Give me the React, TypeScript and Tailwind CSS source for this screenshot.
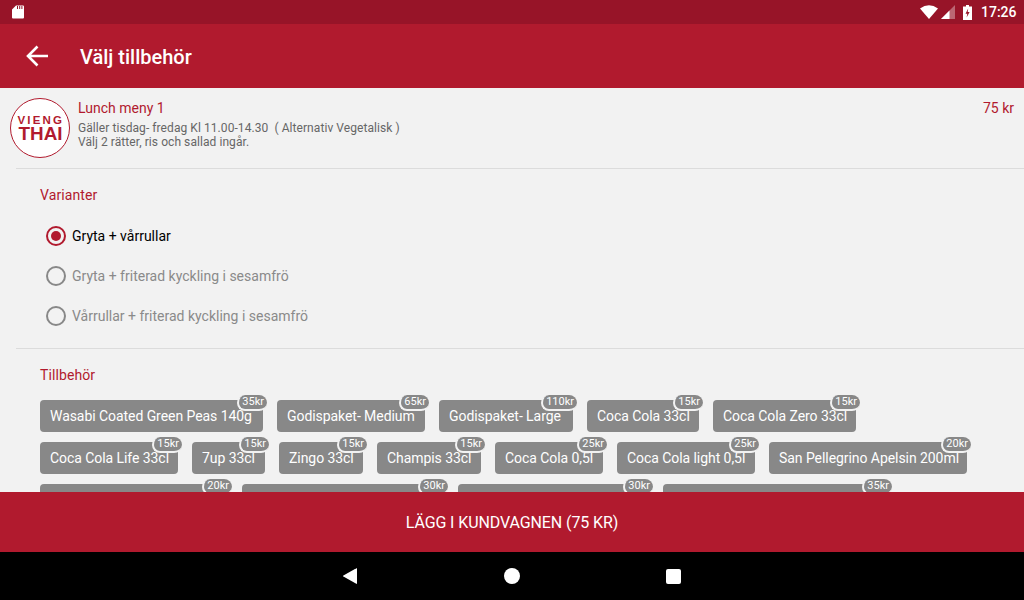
import React from "react";

const chips = [
  ["Wasabi Coated Green Peas 140g", "35kr", "w-[223px]"],
  ["Godispaket- Medium", "65kr", "w-[148px]"],
  ["Godispaket- Large", "110kr", "w-[134px]"],
  ["Coca Cola 33cl", "15kr", "w-[112px]"],
  ["Coca Cola Zero 33cl", "15kr", "w-[143px]"],
  ["Coca Cola Life 33cl", "15kr", "w-[138px]"],
  ["7up 33cl", "15kr", "w-[73px]"],
  ["Zingo 33cl", "15kr", "w-[84px]"],
  ["Champis 33cl", "15kr", "w-[104px]"],
  ["Coca Cola 0,5l", "25kr", "w-[108px]"],
  ["Coca Cola light 0,5l", "25kr", "w-[138px]"],
  ["San Pellegrino Apelsin 200ml", "20kr", "w-[198px]"],
];

const hiddenRow = [
  ["w-[188px]", "20kr"],
  ["w-[202px]", "30kr"],
  ["w-[191px]", "30kr"],
  ["w-[225px]", "35kr"],
];

function Badge({ price }: { price: string }) {
  return (
    <span className="absolute -top-[5px] -right-[4px] h-[14px] px-[3px] rounded-full bg-[#888888] text-white text-[11px] tracking-normal leading-[14px] box-content border-2 border-[#f2f2f2] border-r-0 border-t-0">
      {price}
    </span>
  );
}

function Chip({ name, price, width }: { name: string; price: string; width: string }) {
  return (
    <div className={`relative h-8 pl-[10px] rounded-[4px] bg-[#888888] text-white text-[14px] tracking-[-0.06px] leading-8 whitespace-nowrap ${width}`}>
      {name}
      <Badge price={price} />
    </div>
  );
}

function Radio({ label, active }: { label: string; active?: boolean }) {
  return (
    <div className="h-10 flex items-center pl-[46px] gap-[6px]">
      <span
        className={
          active
            ? "w-5 h-5 rounded-full border-2 border-[#b11a2e] flex items-center justify-center"
            : "w-5 h-5 rounded-full border-2 border-[#888888] flex items-center justify-center"
        }
      >
        {active && <span className="w-[10px] h-[10px] rounded-full bg-[#b11a2e]" />}
      </span>
      <span className={active ? "text-[14px] text-black" : "text-[14px] text-[#8a8a8a]"}>{label}</span>
    </div>
  );
}

export default function App() {
  return (
    <div className="w-[1024px] h-[600px] flex flex-col overflow-hidden bg-[#f2f2f2] font-['Roboto',sans-serif]">
      <div className="h-6 shrink-0 bg-[#971428] flex items-center justify-between pl-3 pr-2 text-white">
        <svg width="12" height="14" viewBox="0 0 12 14" fill="white">
          <path d="M4 0.5h7a1 1 0 0 1 1 1v11a1 1 0 0 1-1 1H1a1 1 0 0 1-1-1V4.5zM5 1v3h1V1zM7.2 1v3h1V1zM9.4 1v3h1V1z" fillRule="evenodd" />
        </svg>
        <div className="flex items-center">
          <svg width="18" height="14" viewBox="0 0 18 14" fill="white" className="mr-[3px]">
            <path d="M0 3.5Q9-3 18 3.5L9 14z" />
          </svg>
          <svg width="14" height="14" viewBox="0 0 14 14" className="mr-[8px]">
            <path d="M14 0V14H0z" fill="white" fillOpacity="0.35" />
            <path d="M8.5 5.5V14H0z" fill="white" />
          </svg>
          <svg width="9" height="15" viewBox="0 0 9 15" className="mr-[9px]">
            <path d="M3 0h3v1.5h3V15H0V1.5h3z" fill="white" />
            <path d="M5.2 3.5L2.5 8.8h1.8L3.6 12.5 6.6 7H4.7z" fill="#971428" />
          </svg>
          <span className="text-[14px] font-medium leading-6 w-[35px]">17:26</span>
        </div>
      </div>

      <div className="h-16 shrink-0 bg-[#b11a2e] flex items-center text-white">
        <svg width="24" height="24" viewBox="0 0 24 24" fill="none" stroke="white" strokeWidth="2.6" className="ml-[25px]">
          <path d="M23 12H3M12.5 2.5L3 12l9.5 9.5" />
        </svg>
        <span className="ml-[31px] text-[20px] font-medium pt-[2px]">Välj tillbehör</span>
      </div>

      <div className="flex-1 min-h-0 overflow-hidden">
        <div className="flex h-[80px] pt-[10px] pl-[10px] pr-[10px]">
          <svg width="60" height="60" viewBox="0 0 60 60" className="shrink-0">
            <circle cx="30" cy="30" r="29.5" fill="white" stroke="#b11a2e" strokeWidth="1" />
            <text x="7.5" y="25.5" fontFamily="Liberation Sans" fontWeight="700" fontSize="11.5" fill="#b11a2e" textLength="44.5" lengthAdjust="spacing">VIENG</text>
            <text x="8.5" y="41.5" fontFamily="Liberation Sans" fontWeight="700" fontSize="19" fill="#b11a2e" textLength="44" lengthAdjust="spacingAndGlyphs">THAI</text>
          </svg>
          <div className="ml-2 flex-1 min-w-0">
            <div className="flex justify-between text-[14px] leading-5 text-[#b11a2e]">
              <span>Lunch meny 1</span>
              <span>75 kr</span>
            </div>
            <div className="text-[12px] leading-[14px] tracking-[0.07px] text-[#666666] mt-[3px] whitespace-pre">
              {"Gäller tisdag- fredag Kl 11.00-14.30  ( Alternativ Vegetalisk )\nVälj 2 rätter, ris och sallad ingår."}
            </div>
          </div>
        </div>

        <div className="ml-4 border-t border-[#dcdcdc] h-[180px]">
          <div className="pl-6 pt-[18px] text-[14px] tracking-[0.1px] leading-4 text-[#b11a2e]">Varianter</div>
          <div className="mt-[13px] -ml-4">
            <Radio label="Gryta + vårrullar" active />
            <Radio label="Gryta + friterad kyckling i sesamfrö" />
            <Radio label="Vårrullar + friterad kyckling i sesamfrö" />
          </div>
        </div>

        <div className="ml-4 border-t border-[#dcdcdc] pl-6">
          <div className="pt-[18px] text-[14px] tracking-[0.1px] leading-4 text-[#b11a2e]">Tillbehör</div>
          <div className="mt-[17px] flex flex-wrap gap-x-[14px] gap-y-[10px] w-[950px]">
            {chips.map(([n, p, w]) => (
              <Chip key={n} name={n} price={p} width={w} />
            ))}
            {hiddenRow.map(([w, p], i) => (
              <div key={i} className={`relative h-8 rounded-[4px] bg-[#888888] ${w}`}>
                <Badge price={p} />
              </div>
            ))}
          </div>
        </div>
      </div>

      <div className="h-[60px] shrink-0 bg-[#b11a2e] flex items-center justify-center pt-[2px] text-white text-[16px] tracking-[-0.1px]">
        LÄGG I KUNDVAGNEN (75 KR)
      </div>

      <div className="h-12 shrink-0 bg-black flex items-center">
        <svg width="14" height="16" viewBox="0 0 14 16" fill="white" className="ml-[343px]">
          <path d="M14 0.5V15.5a0.5 0.5 0 0 1-0.7 0.3L0.4 8.5a0.6 0.6 0 0 1 0-1L13.3 0.2A0.5 0.5 0 0 1 14 0.5z" />
        </svg>
        <span className="ml-[147px] w-4 h-4 rounded-full bg-white" />
        <span className="ml-[146px] w-[15px] h-[15px] rounded-[2px] bg-white" />
      </div>
    </div>
  );
}
